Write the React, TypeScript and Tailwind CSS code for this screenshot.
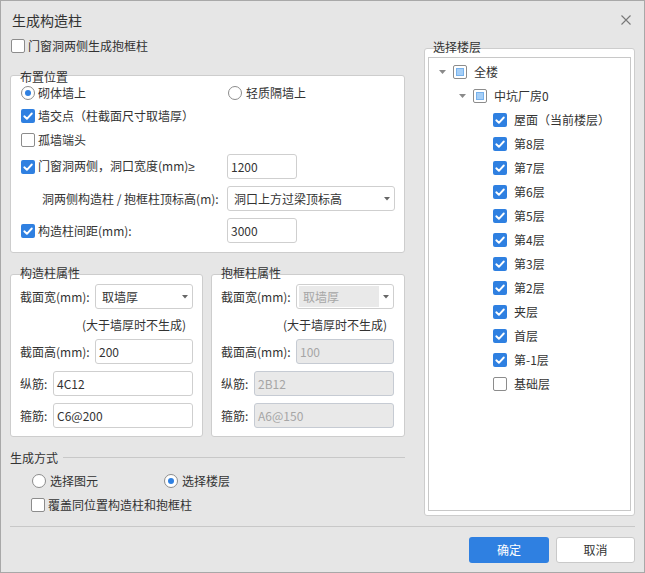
const floors = [
  { name: "屋面（当前楼层）", checked: true },
  { name: "第8层", checked: true },
  { name: "第7层", checked: true },
  { name: "第6层", checked: true },
  { name: "第5层", checked: true },
  { name: "第4层", checked: true },
  { name: "第3层", checked: true },
  { name: "第2层", checked: true },
  { name: "夹层", checked: true },
  { name: "首层", checked: true },
  { name: "第-1层", checked: true },
  { name: "基础层", checked: false },
];

function CheckBox({ checked, partial }: { checked?: boolean; partial?: boolean }) {
  if (checked) {
    return (
      <svg width="14" height="14" viewBox="0 0 14 14" className="shrink-0">
        <rect x="0" y="0" width="14" height="14" rx="2" fill="#2f80e1" />
        <path d="M3.3 7.3 L5.9 9.8 L10.8 4.5" fill="none" stroke="#fff" strokeWidth="1.9" strokeLinecap="round" strokeLinejoin="round" />
      </svg>
    );
  }
  return (
    <span className="w-[14px] h-[14px] shrink-0 rounded-[2px] border border-[#8c8c8c] bg-white flex items-center justify-center">
      {partial && <span className="w-[8px] h-[8px] bg-[#a6cff7] border border-[#78b2ec]" />}
    </span>
  );
}

function Radio({ checked }: { checked?: boolean }) {
  return (
    <span className="w-[14px] h-[14px] shrink-0 rounded-full border border-[#8c8c8c] bg-white flex items-center justify-center">
      {checked && <span className="w-[6px] h-[6px] rounded-full bg-[#2f80e1]" />}
    </span>
  );
}

function Caret({ color = "#666" }: { color?: string }) {
  return (
    <span className="w-[14px] flex items-center justify-center shrink-0">
      <svg width="6" height="4" viewBox="0 0 6 4">
        <path d="M0 0 L6 0 L3 3.5 Z" fill={color} />
      </svg>
    </span>
  );
}

function Input({ value, width, disabled }: { value: string; width: string; disabled?: boolean }) {
  return (
    <div
      className={`${width} h-[25px] shrink-0 rounded-[3px] border flex items-center pl-[3px] ${
        disabled ? "bg-[#e9e9e9] border-[#c6cbd3] text-[#a6a6a6]" : "bg-white border-[#cfcfcf] text-[#333]"
      }`}
    >
      {value}
    </div>
  );
}

function Select({ value, width, disabled }: { value: string; width: string; disabled?: boolean }) {
  if (disabled) {
    return (
      <div className={`${width} h-[25px] shrink-0 rounded-[3px] border border-[#cfcfcf] bg-white flex pl-[2px] pt-[1px] pb-[1px]`}>
        <div className="flex-1 bg-[#e9e9e9] flex items-center pl-[4px] text-[#a6a6a6]">{value}</div>
        <Caret />
      </div>
    );
  }
  return (
    <div className={`${width} h-[25px] shrink-0 rounded-[3px] border border-[#cfcfcf] bg-white flex items-center pl-[6px]`}>
      <span className="flex-1 text-[#333]">{value}</span>
      <Caret />
    </div>
  );
}

function PropPanel({ title, disabled, vals }: { title: string; disabled?: boolean; vals: string[] }) {
  return (
    <div className="flex flex-col">
      <div className="relative z-10 h-[14px] leading-[14px] pl-[10px] -mb-[6px]">{title}</div>
      <div className="border border-[#cdcdcd] rounded-[3px] bg-white pt-[9px] pb-[8px] pl-[9px] pr-[9px]">
        <div className="flex items-center h-[25px]">
          <span className="w-[75px] shrink-0">截面宽(mm):</span>
          <Select value={vals[0]} width="w-[98px]" disabled={disabled} />
        </div>
        <div className="h-[30px] flex items-center pt-[2px] pl-[62px]">(大于墙厚时不生成)</div>
        <div className="flex items-center h-[25px]">
          <span className="w-[75px] shrink-0">截面高(mm):</span>
          <Input value={vals[1]} width="w-[98px]" disabled={disabled} />
        </div>
        <div className="flex items-center h-[25px] mt-[7px]">
          <span className="w-[33px] shrink-0">纵筋:</span>
          <Input value={vals[2]} width="w-[140px]" disabled={disabled} />
        </div>
        <div className="flex items-center h-[25px] mt-[7px]">
          <span className="w-[33px] shrink-0">箍筋:</span>
          <Input value={vals[3]} width="w-[140px]" disabled={disabled} />
        </div>
      </div>
    </div>
  );
}

function TreeCaret() {
  return (
    <span className="w-[12px] flex items-center justify-center shrink-0">
      <svg width="7" height="4" viewBox="0 0 7 4">
        <path d="M0 0 L7 0 L3.5 4 Z" fill="#8a8a8a" />
      </svg>
    </span>
  );
}

export default function App() {
  return (
    <div className="w-[645px] h-[573px] border border-[#a8a8a8] bg-[#e6e6e6] text-[12px] leading-[16px] text-[#333] [font-family:'Noto_Sans_CJK_SC',sans-serif] flex flex-col">
      {/* title */}
      <div className="h-[37px] flex items-center justify-between pl-[11px] pr-[13px]">
        <span className="text-[14px] text-[#333]">生成构造柱</span>
        <svg width="10" height="10" viewBox="0 0 10 10">
          <path d="M0.5 0.5 L9.5 9.5 M9.5 0.5 L0.5 9.5" stroke="#777" strokeWidth="1.1" />
        </svg>
      </div>

      <div className="flex items-start pl-[9px] pr-[9px] gap-[19px]">
        {/* left column */}
        <div className="w-[395px] flex flex-col">
          <div className="h-[16px] flex items-center gap-[3px] pl-[1px]">
            <CheckBox />
            <span>门窗洞两侧生成抱框柱</span>
          </div>

          <div className="relative z-10 mt-[16px] h-[14px] leading-[14px] pl-[10px] -mb-[9px]">布置位置</div>
          <div className="border border-[#cdcdcd] rounded-[3px] bg-white pl-[10px] pr-[9px] pt-[7px] pb-[9px]">
            <div className="h-[20px] flex items-center">
              <div className="w-[207px] flex items-center gap-[3px]">
                <Radio checked />
                <span>砌体墙上</span>
              </div>
              <div className="flex items-center gap-[4px]">
                <Radio />
                <span>轻质隔墙上</span>
              </div>
            </div>
            <div className="h-[20px] mt-[3px] flex items-center gap-[3px]">
              <CheckBox checked />
              <span>墙交点（柱截面尺寸取墙厚）</span>
            </div>
            <div className="h-[20px] mt-[4px] flex items-center gap-[3px]">
              <CheckBox />
              <span>孤墙端头</span>
            </div>
            <div className="h-[25px] mt-[4px] flex items-center">
              <div className="w-[206px] flex items-center gap-[3px]">
                <CheckBox checked />
                <span>
                  门窗洞两侧，洞口宽度(mm)<span className="[font-family:'Noto_Sans',sans-serif]">≥</span>
                </span>
              </div>
              <Input value="1200" width="w-[70px]" />
            </div>
            <div className="h-[25px] mt-[7px] flex items-center">
              <div className="w-[206px] pl-[21px]">洞两侧构造柱 / 抱框柱顶标高(m):</div>
              <Select value="洞口上方过梁顶标高" width="w-[168px]" />
            </div>
            <div className="h-[25px] mt-[7px] flex items-center">
              <div className="w-[206px] flex items-center gap-[3px]">
                <CheckBox checked />
                <span>构造柱间距(mm):</span>
              </div>
              <Input value="3000" width="w-[70px]" />
            </div>
          </div>

          <div className="mt-[13px] grid grid-cols-[193px_194px] gap-[8px]">
            <PropPanel title="构造柱属性" vals={["取墙厚", "200", "4C12", "C6@200"]} />
            <PropPanel title="抱框柱属性" disabled vals={["取墙厚", "100", "2B12", "A6@150"]} />
          </div>

          <div className="mt-[14px] h-[14px] flex items-center">
            <span className="leading-[14px]">生成方式</span>
            <span className="flex-1 h-px bg-[#c8c8c8] ml-[5px] -mt-[1px]" />
          </div>
          <div className="mt-[6px] h-[20px] flex items-center pl-[22px]">
            <div className="w-[132px] flex items-center gap-[4px]">
              <Radio />
              <span>选择图元</span>
            </div>
            <div className="flex items-center gap-[4px]">
              <Radio checked />
              <span>选择楼层</span>
            </div>
          </div>
          <div className="mt-[4px] h-[20px] flex items-center gap-[3px] pl-[21px]">
            <CheckBox />
            <span>覆盖同位置构造柱和抱框柱</span>
          </div>
        </div>

        {/* right column */}
        <div className="w-[211px] flex flex-col">
          <div className="relative z-10 mt-[2px] h-[14px] leading-[14px] pl-[9px] -mb-[6px]">选择楼层</div>
          <div className="h-[468px] border border-[#cdcdcd] rounded-[3px] bg-white pt-[8px] pb-[4px] px-[3px] flex flex-col">
            <div className="flex-1 border border-[#c8c8c8] pt-[2px]">
              <div className="h-[24px] flex items-center pl-[7px]">
                <TreeCaret />
                <span className="ml-[5px]">
                  <CheckBox partial />
                </span>
                <span className="ml-[7px]">全楼</span>
              </div>
              <div className="h-[24px] flex items-center pl-[27px]">
                <TreeCaret />
                <span className="ml-[5px]">
                  <CheckBox partial />
                </span>
                <span className="ml-[7px]">中坑厂房0</span>
              </div>
              {floors.map((f) => (
                <div key={f.name} className="h-[24px] flex items-center gap-[7px] pl-[64px]">
                  <CheckBox checked={f.checked} />
                  <span>{f.name}</span>
                </div>
              ))}
            </div>
          </div>
        </div>
      </div>

      <div className="mx-[9px] mt-[10px] h-px bg-[#c8c8c8]" />
      <div className="mt-[10px] flex justify-end gap-[7px] pr-[9px]">
        <button className="w-[80px] h-[26px] rounded-[3px] bg-[#2f80e1] text-white">确定</button>
        <button className="w-[79px] h-[26px] rounded-[3px] bg-white border border-[#c9c9c9] text-[#333]">取消</button>
      </div>
    </div>
  );
}
